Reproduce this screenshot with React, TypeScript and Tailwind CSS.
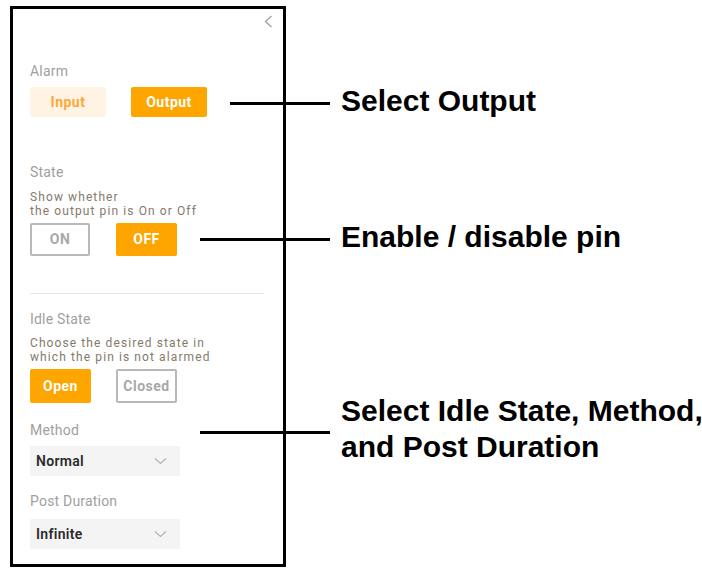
import { ReactNode } from "react";

const orangeBtn =
	"h-full w-full rounded-[2px] bg-[#ffa500] text-white font-bold text-[14px] tracking-[0.5px]";
const outlineBtn =
	"h-full w-full rounded-[2px] border-2 border-[#b8b8b8] bg-white text-[#a8a8a8] font-bold text-[14px] tracking-[0.5px]";

const Label = ({ children, className }: { children: ReactNode; className: string }) => (
	<div className={`text-[14px] leading-[18px] tracking-[0.2px] text-[#a0a0a0] ${className}`}>
		{children}
	</div>
);

const Hint = ({ children, className }: { children: ReactNode; className: string }) => (
	<div className={`text-[12px] leading-[14px] tracking-[1.1px] text-[#85796c] whitespace-nowrap ${className}`}>
		{children}
	</div>
);

const Chevron = () => (
	<svg width="13" height="8" viewBox="0 0 13 8" fill="none">
		<path d="M1 1.5 L6.5 6.5 L12 1.5" stroke="#b3b3b3" strokeWidth="1.2" />
	</svg>
);

const Select = ({ value, className }: { value: string; className: string }) => (
	<div
		className={`flex h-[30px] w-[150px] items-center justify-between bg-[#f4f4f4] pl-[6px] pr-[13px] ${className}`}
	>
		<span className="text-[14px] font-semibold tracking-[0.3px] text-[#2b2b2b]">{value}</span>
		<Chevron />
	</div>
);

const Callout = ({
	children,
	lineClass,
	className,
}: {
	children: ReactNode;
	lineClass: string;
	className: string;
}) => (
	<div className={`flex items-start ${className}`}>
		<div className={`h-[3px] shrink-0 bg-black ${lineClass}`} />
		<div className="ml-[11px] whitespace-nowrap font-['Liberation_Sans',Arial,sans-serif] text-[30px] font-bold leading-[36px] text-black">
			{children}
		</div>
	</div>
);

export default function App() {
	return (
		<div className="flex h-[569px] w-[702px] items-start overflow-hidden bg-white">
			<div className="ml-[10px] mt-[6px] h-[561px] w-[276px] shrink-0 border-[3px] border-black font-['Roboto',sans-serif]">
				<div className="flex justify-end pr-[10px] pt-[6px]">
					<svg width="9" height="13" viewBox="0 0 9 13" fill="none">
						<path d="M7.5 1 L1.5 6.5 L7.5 12" stroke="#a3a3a3" strokeWidth="1.4" />
					</svg>
				</div>

				<div className="pl-[17px] pr-[19px]">
					<Label className="mt-[34px]">Alarm</Label>
					<div className="mt-[7px] flex h-[30px] gap-[25px]">
						<button className="h-full w-[76px] rounded-[2px] bg-[#fff3e3] text-[14px] font-bold tracking-[0.5px] text-[#ffa63a]">
							Input
						</button>
						<button className={`${orangeBtn} !w-[76px]`}>Output</button>
					</div>

					<Label className="mt-[46px]">State</Label>
					<Hint className="mt-[9px]">
						Show whether
						<br />
						the output pin is On or Off
					</Hint>
					<div className="mt-[5px] flex h-[33px] gap-[26px]">
						<div className="w-[60px]">
							<button className={outlineBtn}>ON</button>
						</div>
						<div className="w-[61px]">
							<button className={orangeBtn}>OFF</button>
						</div>
					</div>

					<div className="mt-[37px] h-px bg-[#e6e6e6]" />

					<Label className="mt-[16px]">Idle State</Label>
					<Hint className="mt-[8px]">
						Choose the desired state in
						<br />
						which the pin is not alarmed
					</Hint>
					<div className="mt-[5px] flex h-[34px] gap-[25px]">
						<div className="w-[61px]">
							<button className={orangeBtn}>Open</button>
						</div>
						<div className="w-[61px]">
							<button className={outlineBtn}>Closed</button>
						</div>
					</div>

					<Label className="mt-[18px]">Method</Label>
					<Select value="Normal" className="mt-[7px]" />

					<Label className="mt-[16px]">Post Duration</Label>
					<Select value="Infinite" className="mt-[9px]" />
				</div>
			</div>

			<div className="flex flex-col">
				<Callout className="mt-[83px]" lineClass="ml-[-56px] mt-[19px] w-[100px]">
					Select Output
				</Callout>
				<Callout className="mt-[100px]" lineClass="ml-[-86px] mt-[19px] w-[130px]">
					Enable / disable pin
				</Callout>
				<Callout className="mt-[138px]" lineClass="ml-[-86px] mt-[38px] w-[130px]">
					Select Idle State, Method,
					<br />
					and Post Duration
				</Callout>
			</div>
		</div>
	);
}
